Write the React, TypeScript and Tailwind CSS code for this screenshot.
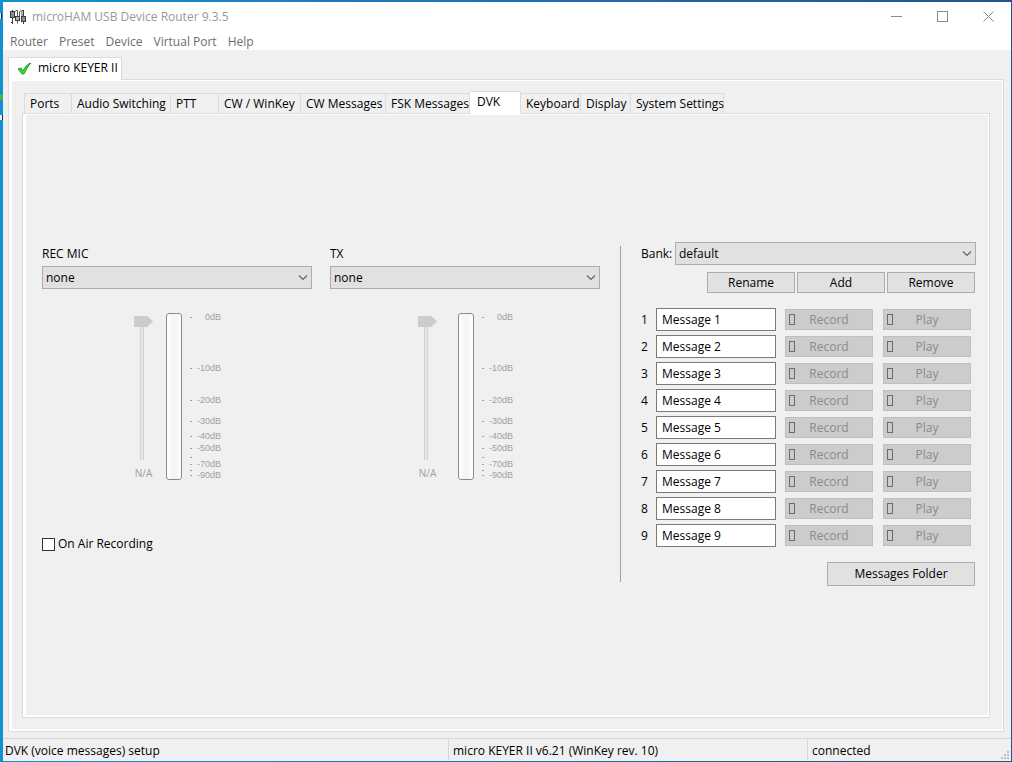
import { useState } from "react";
import type { ReactNode } from "react";
import clsx from "clsx";

const MENU = ["Router", "Preset", "Device", "Virtual Port", "Help"];

const TABS = [
  { label: "Ports", width: "w-[48px]" },
  { label: "Audio Switching", width: "w-[99px]" },
  { label: "PTT", width: "w-[48px]" },
  { label: "CW / WinKey", width: "w-[82px]" },
  { label: "CW Messages", width: "w-[85px]" },
  { label: "FSK Messages", width: "w-[84px]" },
  { label: "DVK", width: "w-[51px]" },
  { label: "Keyboard", width: "w-[60px]" },
  { label: "Display", width: "w-[50px]" },
  { label: "System Settings", width: "w-[93px]" },
];

// tick positions in px from the top of the meter
const SCALE = [
  { y: 4, label: "0dB" },
  { y: 55, label: "-10dB" },
  { y: 87, label: "-20dB" },
  { y: 108, label: "-30dB" },
  { y: 123, label: "-40dB" },
  { y: 135, label: "-50dB" },
  { y: 144, label: "" },
  { y: 151, label: "-70dB" },
  { y: 157, label: "" },
  { y: 162, label: "-90dB" },
];

const MESSAGES = [1, 2, 3, 4, 5, 6, 7, 8, 9];

function AppIcon() {
  return (
    <svg width="16" height="16" viewBox="0 0 16 16" fill="none" stroke="#3c3c3c">
      <path d="M2.5 1v2M2.5 9v6M1 13.5h2" />
      <rect x="0.5" y="2.5" width="4" height="6" fill="#8c8c8c" />
      <path d="M4.5 3.5l1.500-2h1.500v6M7.500 11.500v3" stroke="#555" />
      <rect x="5.5" y="7.5" width="4" height="4" fill="#b0b0b0" />
      <path d="M9.500 9v-6l1.500-1.500 1 1.500v6" stroke="#555" />
      <path d="M13.5 1v7M13.5 13v2M12 1.500h2" />
      <rect x="11.5" y="7.5" width="4" height="5" fill="#8c8c8c" />
    </svg>
  );
}

function Dropdown({ id, value }: { id: string; value: string }) {
  return (
    <div className="relative w-full">
      <select
        id={id}
        className="block h-[23px] w-full appearance-none border border-[#adadad] bg-[#e1e1e1] pl-[3px] text-black"
      >
        <option>{value}</option>
      </select>
      <svg
        className="pointer-events-none absolute top-2 right-1"
        width="10"
        height="7"
        viewBox="0 0 10 7"
        fill="none"
        stroke="#606060"
      >
        <path d="M1 1.5l4 4 4-4" strokeWidth="1.1" />
      </svg>
    </div>
  );
}

function PushButton({ children, className }: { children: ReactNode; className: string }) {
  return (
    <button className={clsx("border border-[#adadad] bg-[#e1e1e1] text-center leading-4", className)}>
      {children}
    </button>
  );
}

function DisabledButton({ children }: { children: ReactNode }) {
  return (
    <button
      disabled
      className="relative h-[21px] w-[88px] border border-[#bfbfbf] bg-[#cccccc] text-center leading-4 text-[#8a8a8a]"
    >
      <span className="absolute top-1 left-[3px] h-[11px] w-[6px] border border-[#6b6b6b]" />
      {children}
    </button>
  );
}

function Level({ id, title, faderPad, gap }: { id: string; title: string; faderPad: string; gap: string }) {
  return (
    <div>
      <label htmlFor={id} className="block h-5 leading-4">
        {title}
      </label>
      <Dropdown id={id} value="none" />
      <div className={clsx("mt-6 flex items-start", faderPad, gap)}>
        <div className="mt-[3px] flex w-[19px] flex-col items-center">
          <input
            type="range"
            disabled
            aria-label={`${title} level`}
            defaultValue={100}
            className="h-[144px] w-[19px] appearance-none bg-[linear-gradient(90deg,#d2d2d2_1px,#e6e6e6_1px,#e6e6e6_3px,#d2d2d2_3px)] bg-[length:4px_100%] bg-[position:6px_0] bg-no-repeat [direction:rtl] [writing-mode:vertical-lr] [&::-webkit-slider-thumb]:h-[11px] [&::-webkit-slider-thumb]:w-[19px] [&::-webkit-slider-thumb]:appearance-none [&::-webkit-slider-thumb]:bg-[#cccccc] [&::-webkit-slider-thumb]:[clip-path:polygon(0_0,70%_0,100%_50%,70%_100%,0_100%)]"
          />
          <span className="mt-[7px] text-[10px] leading-3 text-[#a0a0a0]">N/A</span>
        </div>
        <div className="flex gap-2">
          <div className="h-[167px] w-4 rounded-[3px] border border-[#8a8a8a] bg-linear-to-r from-white via-[#f3f3f3] to-white" />
          <svg width="34" height="172" fill="#a0a0a0" className="font-['Liberation_Sans',Arial,sans-serif] text-[9px]">
            {SCALE.map((tick) => (
              <g key={tick.y}>
                <rect x="0" y={tick.y} width="2" height="1" />
                <text x="31" y={tick.y + 3} textAnchor="end">
                  {tick.label}
                </text>
              </g>
            ))}
          </svg>
        </div>
      </div>
    </div>
  );
}

function MessageRow({ n }: { n: number }) {
  return (
    <div className="flex h-[23px] items-center">
      <label htmlFor={`message-${n}`} className="w-[15px]">
        {n}
      </label>
      <input
        id={`message-${n}`}
        type="text"
        defaultValue={`Message ${n}`}
        className="mr-[9px] h-[23px] w-[120px] border border-[#7a7a7a] bg-white px-[5px]"
      />
      <div className="flex gap-[10px]">
        <DisabledButton>Record</DisabledButton>
        <DisabledButton>Play</DisabledButton>
      </div>
    </div>
  );
}

function VoicePanel() {
  return (
    <div className="flex pt-[127px] pr-3 pl-4">
      <div className="flex-1 pt-1 pr-5">
        <div className="grid grid-cols-2 gap-[18px]">
          <Level id="rec-mic" title="REC MIC" faderPad="pl-[92px]" gap="gap-[13px]" />
          <Level id="tx" title="TX" faderPad="pl-[88px]" gap="gap-[21px]" />
        </div>
        <label className="mt-[51px] flex items-center gap-[3px] leading-4">
          <input type="checkbox" className="size-[13px] appearance-none border border-[#333] bg-white" />
          On Air Recording
        </label>
      </div>

      <div className="my-1 w-px bg-[#a0a0a0]" />

      <div className="flex w-[355px] flex-col pl-5">
        <div className="flex items-center">
          <label htmlFor="bank" className="w-[34px] shrink-0">
            Bank:
          </label>
          <Dropdown id="bank" value="default" />
        </div>
        <div className="mt-[7px] flex justify-end gap-[2px] pr-px">
          <PushButton className="h-[21px] w-[88px]">Rename</PushButton>
          <PushButton className="h-[21px] w-[88px]">Add</PushButton>
          <PushButton className="h-[21px] w-[88px]">Remove</PushButton>
        </div>
        <div className="mt-[15px] flex flex-col gap-1">
          {MESSAGES.map((n) => (
            <MessageRow key={n} n={n} />
          ))}
        </div>
        <PushButton className="mt-[15px] mr-px h-6 w-[148px] self-end">Messages Folder</PushButton>
      </div>
    </div>
  );
}

export default function App() {
  const [tab, setTab] = useState("DVK");

  return (
    <div className="relative flex min-h-screen flex-col bg-linear-to-r from-[#1190d2] to-[#24518f] pt-[2px] pr-px pb-px pl-[3px] font-['Open_Sans','Noto_Sans',sans-serif] text-[12px] text-black">
      {/* desktop icons peeking out on the left edge */}
      <svg className="absolute top-0 left-0" width="3" height="130">
        <path d="M0 13h1v6h-1zM0 115h2v5h-2z" fill="#e8f4fa" />
        <path d="M1 13h1v6h-1zM2 115h1v5h-1z" fill="#0b2d42" />
        <circle cx="0" cy="97" r="3" fill="#49b83c" />
      </svg>

      <header className="bg-white">
        <div className="flex h-[30px] items-center">
          <div className="flex flex-1 items-center gap-[6px] pl-[7px] text-[#999999]">
            <AppIcon />
            <h1>microHAM USB Device Router 9.3.5</h1>
          </div>
          <div className="flex h-7 self-start text-[#8a8a8a]">
            <button aria-label="Minimize" className="flex w-[46px] items-center justify-center">
              <svg width="11" height="11" stroke="currentColor">
                <path d="M0 5.5h11" />
              </svg>
            </button>
            <button aria-label="Maximize" className="flex w-[46px] items-center justify-center">
              <svg width="11" height="11" fill="none" stroke="currentColor">
                <rect x="0.5" y="0.5" width="10" height="10" />
              </svg>
            </button>
            <button aria-label="Close" className="flex w-[46px] items-center justify-center">
              <svg width="11" height="11" stroke="currentColor">
                <path d="M0.5 0.5l10 10M10.5 0.5l-10 10" />
              </svg>
            </button>
          </div>
        </div>
        <nav className="flex h-[18px] items-center gap-[11px] pt-[2px] pl-[7px] leading-4 text-[#6d6d6d]">
          {MENU.map((item) => (
            <button key={item}>{item}</button>
          ))}
        </nav>
      </header>

      <main className="flex flex-1 flex-col bg-[#f0f0f0] pt-[7px] pr-[7px] pb-[6px] pl-[5px]">
        <div className="flex">
          <button className="z-10 -mb-px flex h-[23px] w-[114px] items-center gap-[6px] border border-b-0 border-[#dcdcdc] bg-white pb-[2px] pl-2">
            <svg width="15" height="13" viewBox="0 0 15 13">
              <path d="M1 7l3-1 2 3c2-4 4-7 8-8-3 3-5 7-7 11H5z" fill="#2fe02f" stroke="#168a16" strokeWidth="0.8" />
            </svg>
            <span>micro KEYER II</span>
          </button>
        </div>
        <section className="flex flex-1 flex-col border border-[#dcdcdc] bg-white pt-px pr-px pb-[2px] pl-[3px]">
          <div className="flex flex-1 flex-col bg-[#f0f0f0] pt-[10px] pr-3 pb-[11px] pl-[10px]">
            <div role="tablist" className="flex items-end pl-[2px]">
              {TABS.map((t) => (
                <button
                  key={t.label}
                  role="tab"
                  aria-selected={tab === t.label}
                  onClick={() => setTab(t.label)}
                  className={clsx(
                    "border-t border-r border-[#dcdcdc] text-left leading-4 whitespace-nowrap first:border-l",
                    t.width,
                    tab === t.label ? "z-10 -mb-px h-[23px] bg-white pb-[3px] pl-[7px]" : "h-5 bg-[#f0f0f0] pl-[5px]"
                  )}
                >
                  {t.label}
                </button>
              ))}
            </div>
            <div className="flex flex-1 flex-col border border-[#dcdcdc] bg-white pt-px pr-px pb-[2px] pl-[3px]">
              <div role="tabpanel" className="flex-1 bg-[#f0f0f0]">
                <VoicePanel />
              </div>
            </div>
          </div>
        </section>
      </main>

      <footer className="relative flex h-[23px] items-center border-t border-[#d7d7d7] bg-[#f0f0f0] leading-4">
        <div className="h-5 flex-1 pt-[3px] pl-[2px]">DVK (voice messages) setup</div>
        <div className="h-5 w-[359px] border-l border-[#d7d7d7] pt-[3px] pl-1">micro KEYER II v6.21 (WinKey rev. 10)</div>
        <div className="h-5 w-[204px] border-l border-[#d7d7d7] pt-[3px] pl-1">connected</div>
        <svg className="absolute right-[2px] bottom-[2px]" width="8" height="8" fill="#bdbdbd">
          <path d="M6 0h2v2h-2zM3 3h2v2h-2zM6 3h2v2h-2zM0 6h2v2h-2zM3 6h2v2h-2zM6 6h2v2h-2z" />
        </svg>
      </footer>
    </div>
  );
}
